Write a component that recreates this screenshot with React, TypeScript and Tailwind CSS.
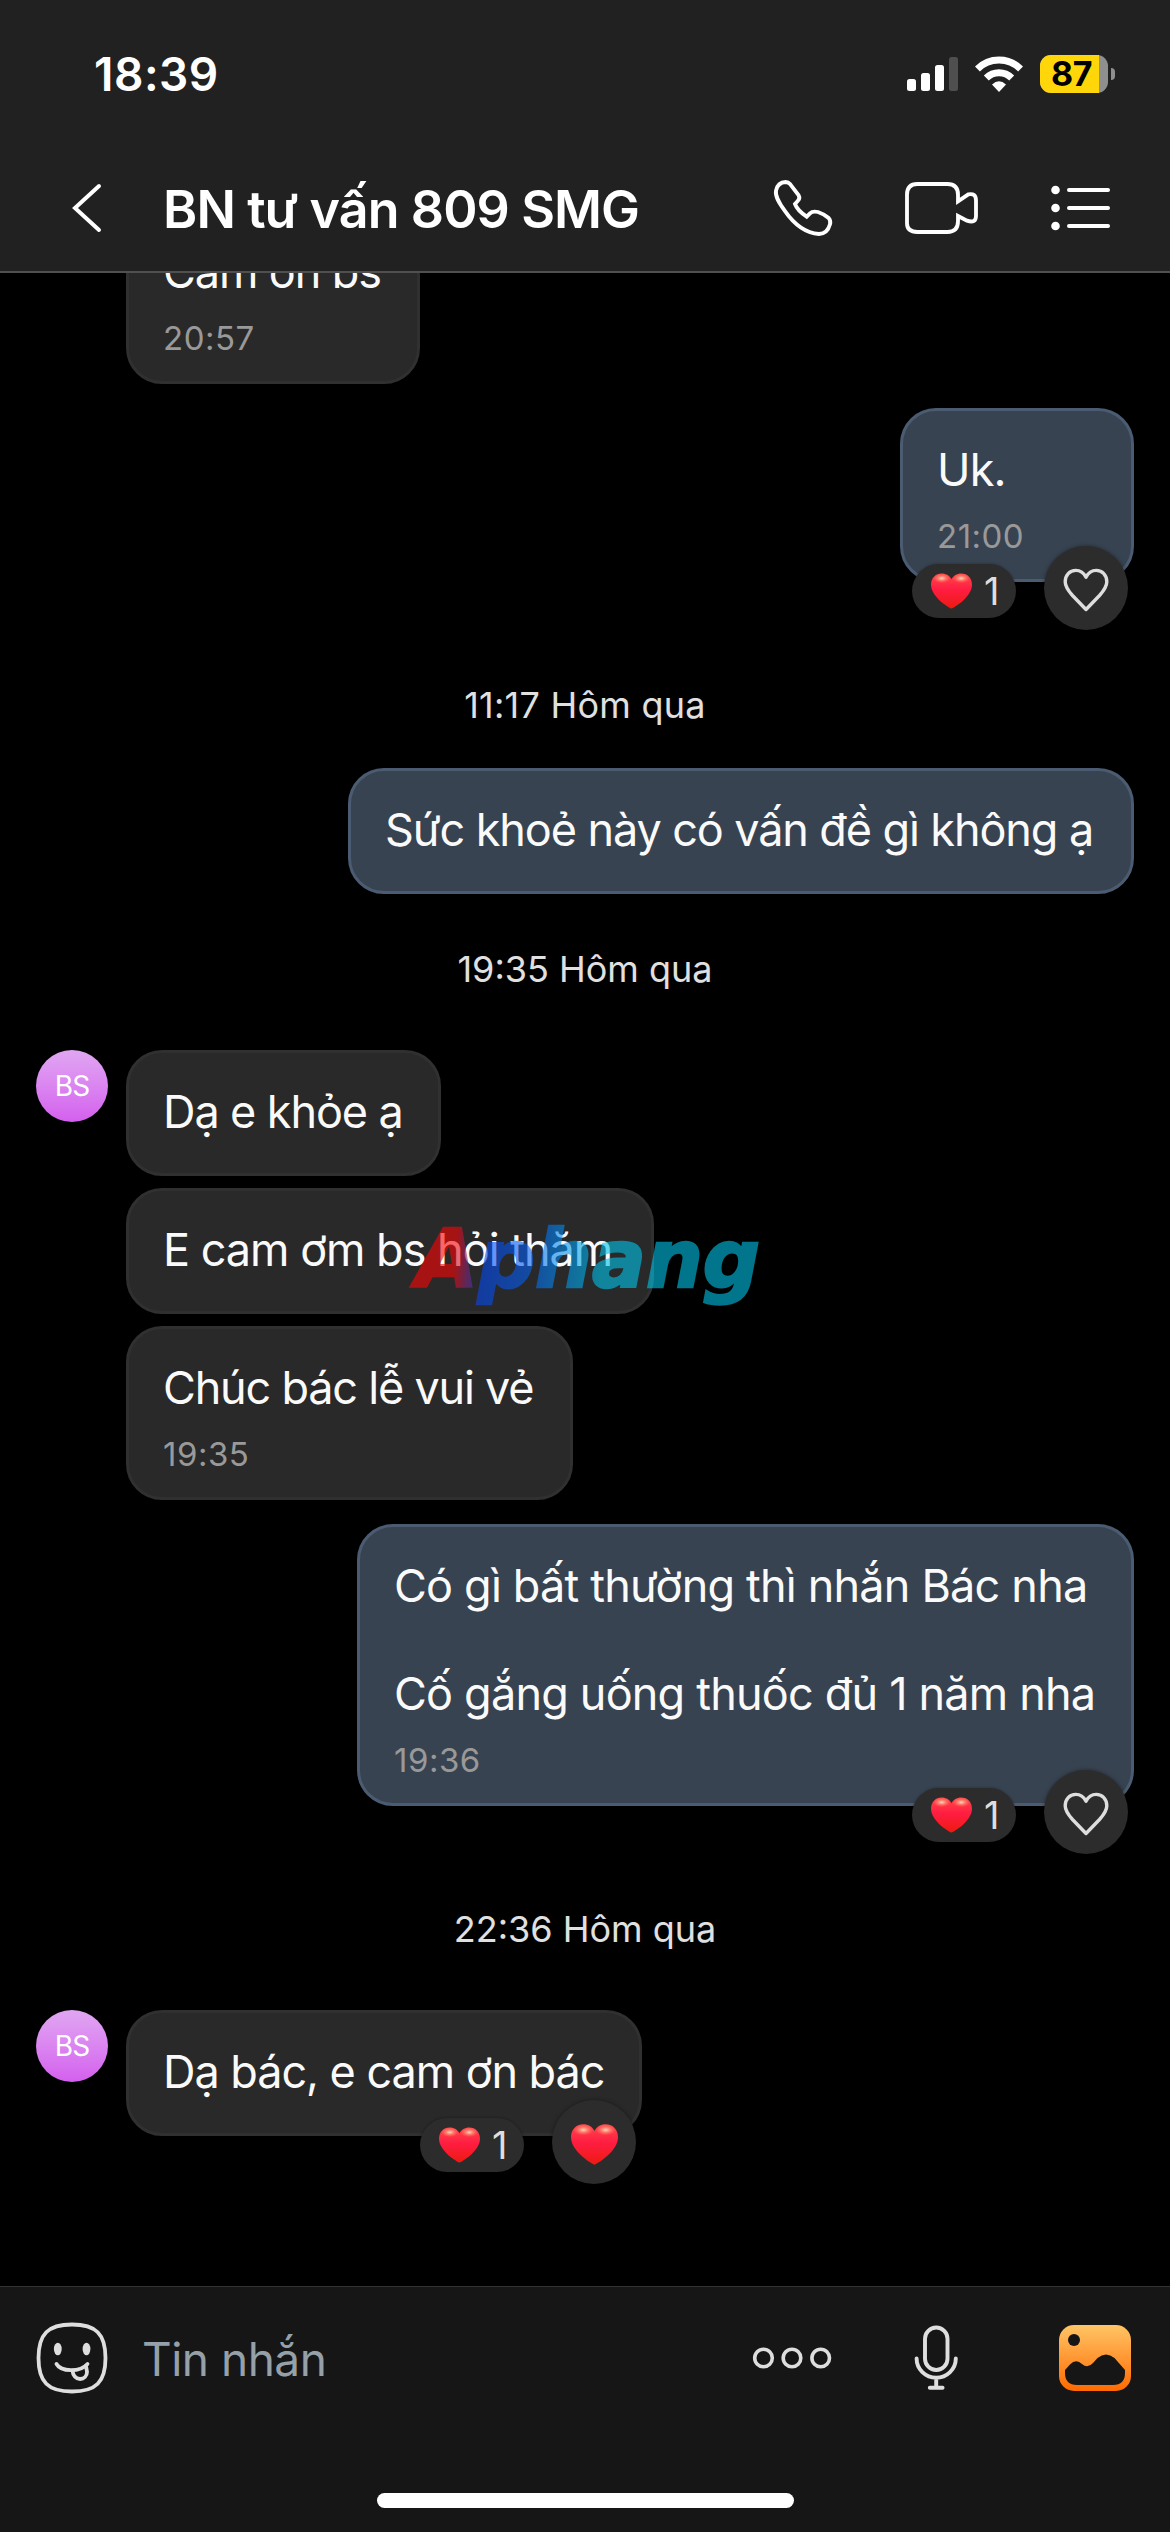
import type { ReactNode } from 'react'
import clsx from 'clsx'

function Heart({ className }: { className?: string }) {
  return (
    <svg viewBox="0 0 42 36" className={className}>
      <defs>
        <linearGradient id="heart-body" x1="0" y1="0" x2="0" y2="1">
          <stop offset="0" stopColor="#ff4a4a" />
          <stop offset="0.45" stopColor="#ff1d42" />
          <stop offset="1" stopColor="#ee1a10" />
        </linearGradient>
        <radialGradient id="heart-shine">
          <stop offset="0" stopColor="#ffe3c0" stopOpacity="0.95" />
          <stop offset="1" stopColor="#ff7a5c" stopOpacity="0" />
        </radialGradient>
      </defs>
      <path
        d="M21 36C19.6 36 0 24.5 0 11.6C0 4.8 4.6 0 11 0c4.600 0 8.200 2.300 10 6C22.800 2.300 26.400 0 31 0c6.400 0 11 4.800 11 11.600C42 24.500 22.400 36 21 36Z"
        fill="url(#heart-body)"
      />
      <ellipse cx="11" cy="5" rx="9" ry="5" fill="url(#heart-shine)" />
      <ellipse cx="31" cy="5" rx="9" ry="5" fill="url(#heart-shine)" />
    </svg>
  )
}

function HeartOutline() {
  return (
    <svg viewBox="0 0 46 44" className="mt-1 h-[44px] w-[46px]" fill="none" stroke="#dedede" strokeWidth="3.400">
      <path
        strokeLinejoin="round"
        d="M23 41.500L9.500 27.500C4.500 22 2.200 18.500 2.200 13.800C2.200 7 6.700 2.400 12.800 2.400c4.200 0 7.800 2.200 10.200 6.800C25.400 4.600 29 2.400 33.200 2.400c6.100 0 10.600 4.600 10.600 11.400c0 4.700-2.300 8.200-7.300 13.700Z"
      />
    </svg>
  )
}

function Reactions({ liked = false }: { liked?: boolean }) {
  return (
    <div className="absolute right-1.5 -bottom-12 flex items-center gap-7">
      <div className="mt-1.5 flex h-[54px] w-[104px] items-center rounded-full bg-[#2c2c2c] pl-[19px] shadow-[0_0_3px_rgba(0,0,0,0.4)]">
        <Heart className="h-[36px] w-[41px]" />
        <span className="ml-3 text-[38px] leading-[54px] text-[#dedede]">1</span>
      </div>
      <div className="flex size-[84px] items-center justify-center rounded-full bg-[#2c2c2c] shadow-[0_0_4px_rgba(0,0,0,0.4)]">
        {liked ? <Heart className="mt-1 h-[41px] w-[47px]" /> : <HeartOutline />}
      </div>
    </div>
  )
}

type BubbleProps = {
  lines: string[]
  className: string
  mine?: boolean
  time?: string
  children?: ReactNode
}

function Bubble({ lines, className, mine, time, children }: BubbleProps) {
  return (
    <div className={clsx('relative', mine && 'self-end', className)}>
      <div
        className={clsx(
          'rounded-[36px] border-[3px] pt-8 pl-[34px]',
          mine ? 'border-[#4b5c72] bg-[#384351]' : 'border-[#303030] bg-[#292929]',
          time ? 'pb-[23px]' : 'pb-[34px]',
        )}
      >
        {lines.map((line, i) => (
          <p key={i} className="h-[54px] text-[45px] leading-[54px] whitespace-nowrap text-[#fafafa]">
            {line}
          </p>
        ))}
        {time && (
          <p className="mt-[19px] text-[33px] leading-10 tracking-[0.5px] text-[#999999]">{time}</p>
        )}
      </div>
      {children}
    </div>
  )
}

function Avatar() {
  return (
    <div className="flex size-[72px] shrink-0 items-center justify-center rounded-full bg-linear-to-b from-[#e0a6f2] to-[#d45fee] text-[28px] tracking-[-1px] text-white">
      BS
    </div>
  )
}

function DateLabel({ className, children }: { className?: string; children: ReactNode }) {
  return (
    <p className={clsx('text-center text-[36px] leading-[42px] text-[#e0e0e0]', className)}>{children}</p>
  )
}

function StatusBar() {
  return (
    <div className="flex h-[148px] items-center pr-[55px] pl-[94px]">
      <span className="text-[46px] font-semibold tracking-[0.5px]">18:39</span>
      <div className="ml-auto flex items-center">
        <svg viewBox="0 0 51 38" className="h-[38px] w-[51px]" fill="#fff">
          <rect x="0" y="24" width="9" height="12" rx="2.500" />
          <rect x="14" y="18" width="9" height="18" rx="2.500" />
          <rect x="28" y="10" width="9" height="26" rx="2.500" />
          <rect x="42" y="2" width="9" height="34" rx="2.500" fill="#4f4f4f" />
        </svg>
        <svg viewBox="0 0 48 36" className="ml-[17px] h-[36px] w-[48px]" fill="none" stroke="#fff" strokeWidth="7">
          <path d="M2.400 13A30.500 30.500 0 0 1 45.600 13" />
          <path d="M11.300 22A18 18 0 0 1 36.700 22" />
          <path d="M24 36L17 28.600Q24 22 31 28.600Z" fill="#fff" stroke="none" />
        </svg>
        <div className="ml-[17px] flex h-[38px] w-[68px] items-center rounded-[11px] bg-[#8f8f8f]">
          <div className="h-full w-[59px] rounded-l-[11px] bg-[#ffd60a] pl-[11px] text-[34px] leading-[38px] font-bold tracking-[-0.5px] text-black">
            87
          </div>
        </div>
        <div className="ml-[3px] h-[12px] w-[4px] rounded-r-full bg-[#8f8f8f]" />
      </div>
    </div>
  )
}

function Header() {
  return (
    <header className="h-[273px] shrink-0 border-b-2 border-[#505050] bg-[#212121] text-white">
      <StatusBar />
      <div className="flex h-[120px] items-center pl-[70px]">
        <svg viewBox="0 0 34 50" className="h-[50px] w-[34px]" fill="none" stroke="#fff" strokeWidth="4">
          <path d="M29 3L5 25L29 47" strokeLinecap="round" />
        </svg>
        <h1 className="ml-[59px] w-[500px] pt-1 text-[52px] leading-[60px] font-semibold tracking-[-0.9px] whitespace-nowrap">
          BN tư vấn 809 SMG
        </h1>
        <svg viewBox="0 0 186 180" className="ml-[109px] h-[60px] w-[62px]" fill="none" stroke="#fff" strokeWidth="11.500">
          <path d="M41 12Q49 12 55 19L80 52Q85 61 77 69L69 78Q76 97 104 116L114 106Q122 98 138 102Q158 109 170 120Q177 128 174 139Q166 168 141 168C94 165 60 130 38 98C20 73 9 55 12 38Q17 13 41 12Z" />
        </svg>
        <svg viewBox="0 0 228 168" className="ml-[69px] h-[56px] w-[76px]" fill="none" stroke="#fff" strokeWidth="11.500">
          <path d="M165 64V44Q165 12 133 12H43Q12 12 12 44V130Q12 156 43 156H133Q165 156 165 124V108L192 122Q219 131 219 108V62Q219 38 196 43Z" />
        </svg>
        <svg viewBox="0 0 60 48" className="ml-[72px] h-[48px] w-[60px]" fill="#fff">
          <circle cx="4.500" cy="6" r="4.300" />
          <circle cx="4.500" cy="24" r="4.300" />
          <circle cx="4.500" cy="42" r="4.300" />
          <rect x="16" y="4" width="43" height="4" rx="2" />
          <rect x="16" y="22" width="43" height="4" rx="2" />
          <rect x="16" y="40" width="43" height="4" rx="2" />
        </svg>
      </div>
    </header>
  )
}

function Composer() {
  return (
    <footer className="flex h-[246px] shrink-0 flex-col items-center border-t border-[#333333] bg-[#161616]">
      <div className="flex h-[142px] w-full items-center pl-[36px]">
        <svg viewBox="0 0 72 72" className="size-[72px]" fill="none" stroke="#dedede" strokeWidth="3.800">
          <path d="M36 2.500C60 2.500 69.500 12 69.500 36S60 69.500 36 69.500S2.500 60 2.500 36S12 2.500 36 2.500Z" />
          <ellipse cx="21.800" cy="27" rx="3.900" ry="6.300" fill="#dedede" stroke="none" />
          <ellipse cx="50.500" cy="27" rx="3.900" ry="6.300" fill="#dedede" stroke="none" />
          <path d="M20.500 42C25 50 44 50.500 51.500 42" strokeLinecap="round" />
          <path d="M36.500 48.500C37 54 40 57 44 57S51 54 51 50L50 44" />
        </svg>
        <span className="ml-[34px] w-[300px] pt-[3px] text-[46px] tracking-[-0.500px] text-[#95a0a8]">Tin nhắn</span>
        <svg viewBox="0 0 80 24" className="ml-[310px] h-[24px] w-[80px]" fill="none" stroke="#dedede" strokeWidth="3.600">
          <circle cx="11.500" cy="12" r="8.800" />
          <circle cx="40" cy="12" r="8.800" />
          <circle cx="68.700" cy="12" r="8.800" />
        </svg>
        <svg viewBox="0 0 44 66" className="ml-[82px] h-[66px] w-[44px]" fill="none" stroke="#dedede" strokeWidth="3.900" strokeLinecap="round">
          <rect x="11" y="2.500" width="22.500" height="42.500" rx="11.250" />
          <path d="M2.600 33.500A19.600 19.200 0 0 0 41.800 33.500M22.200 53V62M15.800 62.700H28.600" />
        </svg>
        <svg viewBox="0 0 72 66" className="ml-[101px] h-[66px] w-[72px]">
          <defs>
            <linearGradient id="photo" x1="0" y1="0" x2="0" y2="1">
              <stop offset="0" stopColor="#ffc566" />
              <stop offset="1" stopColor="#ff6a00" />
            </linearGradient>
          </defs>
          <rect width="72" height="66" rx="15" fill="url(#photo)" />
          <circle cx="15" cy="15" r="6" fill="#161616" />
          <path
            d="M6 45L11 39.500Q17 33.500 23 39Q28.500 44 34 38L38.500 33Q47 26 55.500 33L66 45V48Q66 60 54 60H18Q6 60 6 48Z"
            fill="#161616"
          />
        </svg>
      </div>
      <div className="mt-[64px] h-[15px] w-[417px] rounded-full bg-white" />
    </footer>
  )
}

function Watermark() {
  return (
    <svg viewBox="0 0 390 140" className="absolute top-[1196px] left-[405px] h-[140px] w-[390px] opacity-60">
      <defs>
        <linearGradient id="brand" gradientUnits="userSpaceOnUse" x1="6" y1="40" x2="354" y2="70">
          <stop offset="0.130" stopColor="#fb0505" />
          <stop offset="0.210" stopColor="#0548f2" />
          <stop offset="0.340" stopColor="#0560f2" />
          <stop offset="0.550" stopColor="#00c3e8" />
          <stop offset="1" stopColor="#00c3e8" />
        </linearGradient>
      </defs>
      <text
        x="11"
        y="91"
        textLength="344"
        lengthAdjust="spacingAndGlyphs"
        fill="url(#brand)"
        stroke="url(#brand)"
        strokeWidth="2.500"
        className="font-['DejaVu_Sans',sans-serif] text-[81px] font-bold italic"
      >
        Aphang
      </text>
    </svg>
  )
}

export default function App() {
  return (
    <div className="relative flex h-[2532px] w-[1170px] flex-col overflow-hidden bg-black font-['Inter',sans-serif]">
      <Header />
      {/* scrolled to the newest message, older ones slide under the header */}
      <main className="flex min-h-0 flex-1 flex-col justify-end overflow-hidden pr-9 pb-[150px] pl-9">
        <Bubble lines={['Cam on bs']} time="20:57" className="ml-[90px] w-[294px] shrink-0 tracking-[-1.1px]" />
        <Bubble mine lines={['Uk.']} time="21:00" className="mt-6 w-[234px] shrink-0 tracking-[-0.8px]">
          <Reactions />
        </Bubble>

        <DateLabel className="mt-[102px] mb-[42px] tracking-[0.25px]">11:17 Hôm qua</DateLabel>
        <Bubble mine lines={['Sức khoẻ này có vấn đề gì không ạ']} className="w-[786px] shrink-0 tracking-[-1.1px]" />

        <DateLabel className="mt-[54px] mb-[60px]">19:35 Hôm qua</DateLabel>
        <div className="flex shrink-0 gap-[18px]">
          <Avatar />
          <div className="flex flex-col gap-3">
            <Bubble lines={['Dạ e khỏe ạ']} className="w-[315px] tracking-[-1.1px]" />
            <Bubble lines={['E cam ơm bs hỏi thăm']} className="w-[528px] tracking-[-1px]" />
            <Bubble lines={['Chúc bác lễ vui vẻ']} time="19:35" className="w-[447px] tracking-[-1.2px]" />
          </div>
        </div>
        <Bubble
          mine
          lines={['Có gì bất thường thì nhắn Bác nha', '', 'Cố gắng uống thuốc đủ 1 năm nha']}
          time="19:36"
          className="mt-6 w-[777px] shrink-0 tracking-[-0.8px]"
        >
          <Reactions />
        </Bubble>

        <DateLabel className="mt-[102px] mb-[60px]">22:36 Hôm qua</DateLabel>
        <div className="flex shrink-0 gap-[18px]">
          <Avatar />
          <Bubble lines={['Dạ bác, e cam ơn bác']} className="w-[516px] tracking-[-1.05px]">
            <Reactions liked />
          </Bubble>
        </div>
      </main>
      <Composer />
      <Watermark />
    </div>
  )
}
